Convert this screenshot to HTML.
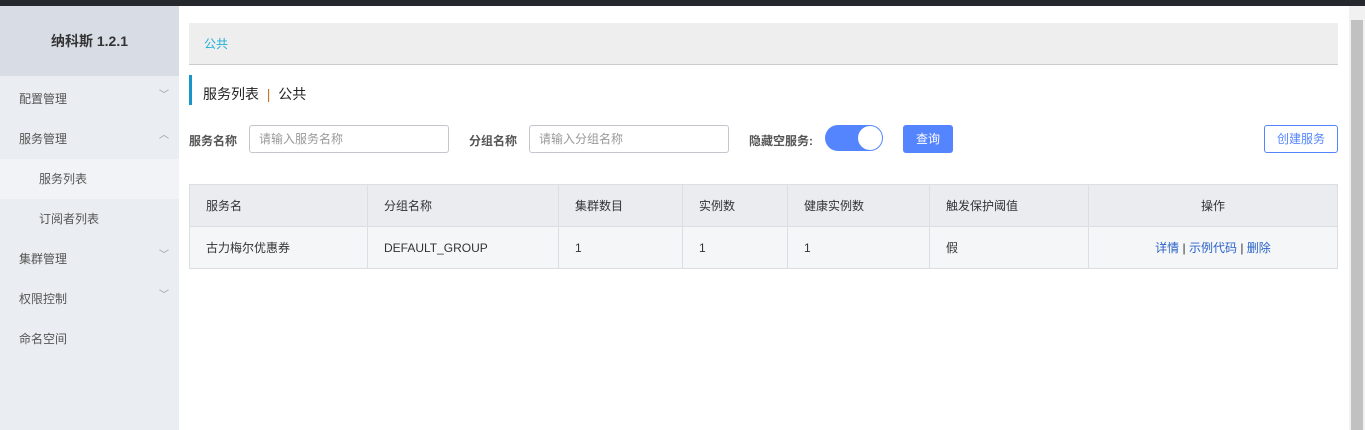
<!DOCTYPE html>
<html><head><meta charset="utf-8"><style>
*{margin:0;padding:0;box-sizing:border-box}
body{width:1365px;height:430px;overflow:hidden;background:#fff;font-family:"Liberation Sans","Noto Sans CJK SC",sans-serif;font-size:12px;color:#333;position:relative}
.top{position:absolute;left:0;top:0;width:1365px;height:6px;background:#25282c}
.side{position:absolute;left:0;top:6px;width:179px;height:424px;background:#eaedf1}
.logo{height:70px;background:#d8dde5;text-align:center;line-height:70px;font-weight:bold;font-size:14px;color:#333;margin-bottom:3px}
.it{height:40px;line-height:40px;padding-left:19px;color:#555;font-size:12px;position:relative}
.sub{padding-left:39px}
.act{background:#f2f3f7}
.ar{position:absolute;left:159px;top:-3px;color:#999;font-size:10px}
.sb{position:absolute;left:1349px;top:6px;width:16px;height:424px;background:#f1f1f1}
.sb div{position:absolute;left:2px;top:14px;width:12px;height:410px;background:#c1c1c1}
.bc{position:absolute;left:189px;top:23px;width:1149px;height:42px;background:#eee;border-bottom:1px solid #ccc;color:#22b0d6;padding-left:15px;line-height:42px}
.tt{position:absolute;left:189px;top:75px;height:30px;border-left:3px solid #1995c8;padding-left:11px;line-height:38px;font-size:14px;color:#222}
.lb{position:absolute;top:132px;font-weight:bold;color:#555}
.in{position:absolute;top:125px;width:200px;height:28px;border:1px solid #c4c6cf;border-radius:3px;color:#999;padding-left:9px;line-height:26px}
.tg{position:absolute;left:825px;top:125px;width:58px;height:26px;border-radius:13px;background:#5584ff}
.tg div{position:absolute;right:1px;top:1px;width:24px;height:24px;border-radius:12px;background:#fff}
.q{position:absolute;left:903px;top:125px;width:50px;height:28px;background:#5584ff;border-radius:3px;color:#fff;text-align:center;line-height:28px}
.cr{position:absolute;left:1264px;top:125px;width:74px;height:28px;border:1px solid #5584ff;border-radius:3px;color:#5584ff;text-align:center;line-height:26px}
table{position:absolute;left:189px;top:184px;width:1149px;border-collapse:collapse}
td{border:1px solid #dcdee3;height:42px;padding-left:16px;color:#333}
thead td{background:#ebecf0}
tbody td{background:#f5f6f8}
a{color:#2b62c7;text-decoration:none}
</style></head><body>
<div class="top"></div>
<div class="side">
<div class="logo">纳科斯 1.2.1</div>
<div class="it">配置管理<span class="ar">﹀</span></div>
<div class="it">服务管理<span class="ar">︿</span></div>
<div class="it sub act">服务列表</div>
<div class="it sub">订阅者列表</div>
<div class="it">集群管理<span class="ar">﹀</span></div>
<div class="it">权限控制<span class="ar">﹀</span></div>
<div class="it">命名空间</div>
</div>
<div class="bc">公共</div>
<div class="tt">服务列表 <span style="color:#c0772a">&nbsp;|&nbsp;</span> 公共</div>
<div class="lb" style="left:189px">服务名称</div>
<div class="in" style="left:249px">请输入服务名称</div>
<div class="lb" style="left:469px">分组名称</div>
<div class="in" style="left:529px">请输入分组名称</div>
<div class="lb" style="left:749px">隐藏空服务:</div>
<div class="tg"><div></div></div>
<div class="q">查询</div>
<div class="cr">创建服务</div>
<table>
<colgroup><col style="width:178px"><col style="width:191px"><col style="width:124px"><col style="width:105px"><col style="width:142px"><col style="width:159px"><col></colgroup>
<thead><tr><td>服务名</td><td>分组名称</td><td>集群数目</td><td>实例数</td><td>健康实例数</td><td>触发保护阈值</td><td style="text-align:center;padding:0">操作</td></tr></thead>
<tbody><tr><td>古力梅尔优惠券</td><td>DEFAULT_GROUP</td><td>1</td><td>1</td><td>1</td><td>假</td><td style="text-align:center;padding:0"><a>详情</a> | <a>示例代码</a> | <a>删除</a></td></tr></tbody>
</table>
<div class="sb"><div></div></div>
</body></html>
